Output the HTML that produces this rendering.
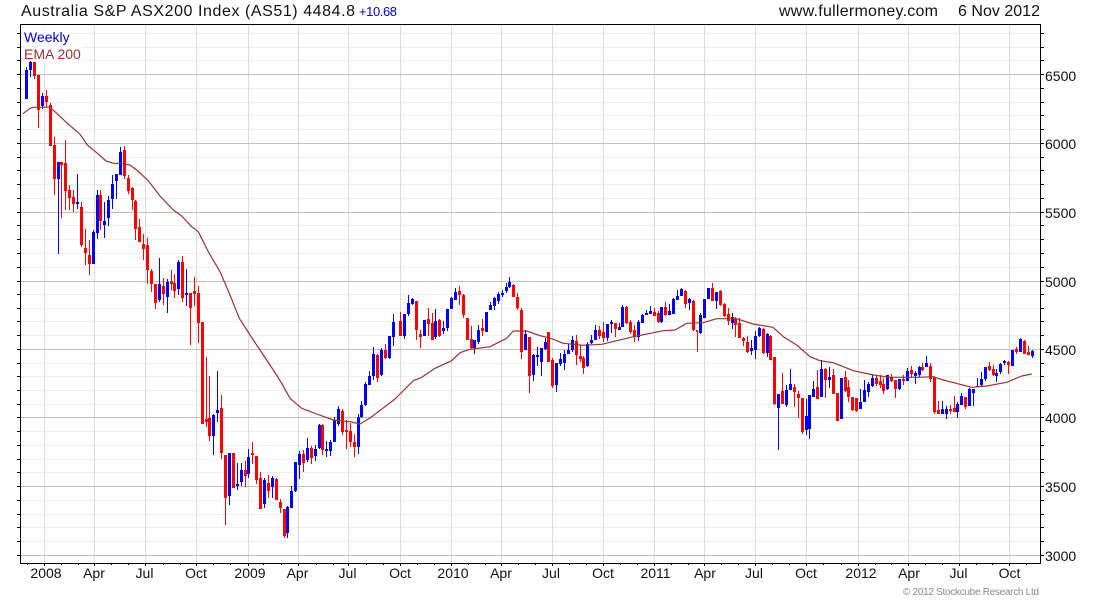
<!DOCTYPE html>
<html><head><meta charset="utf-8"><title>Australia S&amp;P ASX200 Index</title>
<style>
html,body{margin:0;padding:0;background:#fff;width:1100px;height:600px;overflow:hidden}
svg{display:block}
text{font-family:"Liberation Sans",Arial,sans-serif;font-size:14px;fill:#111}
.r{fill:#f00}.b{fill:#00f}
</style></head><body>
<svg width="1100" height="600" viewBox="0 0 1100 600" xmlns="http://www.w3.org/2000/svg">
<g shape-rendering="crispEdges" fill="none">
<path stroke="#f0f0f0" d="M20 541.5H1040M20 527.5H1040M20 514.5H1040M20 500.5H1040M20 472.5H1040M20 459.5H1040M20 445.5H1040M20 431.5H1040M20 404.5H1040M20 390.5H1040M20 376.5H1040M20 363.5H1040M20 335.5H1040M20 321.5H1040M20 308.5H1040M20 294.5H1040M20 267.5H1040M20 253.5H1040M20 239.5H1040M20 225.5H1040M20 198.5H1040M20 184.5H1040M20 170.5H1040M20 157.5H1040M20 129.5H1040M20 115.5H1040M20 102.5H1040M20 88.5H1040M20 60.5H1040M20 47.5H1040M20 33.5H1040"/>
<path stroke="#dcdcdc" d="M44.5 24V563M94.5 24V563M145.5 24V563M196.5 24V563M248.5 24V563M298.5 24V563M348.5 24V563M400.5 24V563M451.5 24V563M501.5 24V563M552.5 24V563M603.5 24V563M654.5 24V563M704.5 24V563M755.5 24V563M806.5 24V563M858.5 24V563M908.5 24V563M959.5 24V563M1009.5 24V563"/>
<path stroke="#c0c0c0" d="M20 74.5H1040M20 143.5H1040M20 212.5H1040M20 281.5H1040M20 349.5H1040M20 417.5H1040M20 486.5H1040M20 555.5H1040"/>
</g>
<rect x="22" y="27" width="50" height="18" fill="#fff"/>
<rect x="22" y="45" width="60" height="17" fill="#fff"/>
<g shape-rendering="crispEdges">
<path class="b" d="M26 67h1V99h-1zM25 70h3V99h-3zM30 61h1V77h-1zM29 62h3V70h-3z"/>
<path class="r" d="M34 62h1V79h-1zM33 62h3V76h-3zM38 75h1V128h-1zM37 75h3V110h-3z"/>
<path class="b" d="M42 93h1V109h-1zM41 96h3V106h-3z"/>
<path class="r" d="M46 90h1V107h-1zM45 96h3V102h-3zM50 103h1V146h-1zM49 105h3V146h-3zM54 137h1V195h-1zM53 145h3V179h-3z"/>
<path class="b" d="M58 162h1V254h-1zM57 162h3V179h-3z"/>
<path class="r" d="M61 162h1V218h-1zM60 162h3V165h-3zM65 140h1V210h-1zM64 163h3V191h-3zM69 185h1V210h-1zM68 190h3V198h-3zM73 190h1V212h-1zM72 197h3V204h-3z"/>
<path class="b" d="M77 174h1V209h-1zM76 202h3V204h-3z"/>
<path class="r" d="M81 202h1V247h-1zM80 207h3V245h-3zM85 229h1V265h-1zM84 248h3V253h-3zM89 240h1V275h-1zM88 255h3V264h-3z"/>
<path class="b" d="M93 230h1V264h-1zM92 232h3V264h-3zM97 190h1V239h-1zM96 195h3V233h-3z"/>
<path class="r" d="M100 190h1V230h-1zM99 195h3V221h-3z"/>
<path class="b" d="M104 202h1V238h-1zM103 221h3V225h-3zM108 196h1V226h-1zM107 200h3V218h-3zM112 175h1V209h-1zM111 184h3V199h-3zM116 174h1V199h-1zM115 174h3V181h-3zM120 147h1V175h-1zM119 152h3V175h-3z"/>
<path class="r" d="M124 146h1V179h-1zM123 150h3V176h-3zM128 175h1V194h-1zM127 178h3V191h-3zM132 187h1V210h-1zM131 188h3V200h-3zM135 200h1V240h-1zM134 201h3V229h-3zM139 219h1V242h-1zM138 227h3V242h-3zM143 234h1V260h-1zM142 244h3V249h-3zM147 238h1V284h-1zM146 245h3V270h-3zM151 269h1V292h-1zM150 271h3V284h-3zM155 284h1V309h-1zM154 284h3V303h-3z"/>
<path class="b" d="M159 258h1V302h-1zM158 284h3V300h-3z"/>
<path class="r" d="M163 278h1V305h-1zM162 286h3V294h-3z"/>
<path class="b" d="M167 279h1V313h-1zM166 282h3V297h-3z"/>
<path class="r" d="M171 270h1V290h-1zM170 281h3V284h-3zM174 274h1V298h-1zM173 283h3V291h-3z"/>
<path class="b" d="M178 260h1V295h-1zM177 262h3V289h-3z"/>
<path class="r" d="M182 256h1V302h-1zM181 262h3V298h-3z"/>
<path class="b" d="M186 269h1V306h-1zM185 293h3V295h-3z"/>
<path class="r" d="M190 293h1V345h-1zM189 293h3V308h-3zM194 277h1V306h-1zM193 291h3V294h-3zM198 286h1V343h-1zM197 293h3V323h-3zM202 322h1V424h-1zM201 322h3V424h-3zM206 357h1V427h-1zM205 419h3V422h-3zM209 376h1V441h-1zM208 418h3V436h-3z"/>
<path class="b" d="M213 414h1V455h-1zM212 415h3V436h-3zM217 371h1V422h-1zM216 410h3V413h-3z"/>
<path class="r" d="M221 395h1V459h-1zM220 408h3V453h-3zM225 455h1V525h-1zM224 455h3V498h-3z"/>
<path class="b" d="M229 453h1V505h-1zM228 453h3V496h-3z"/>
<path class="r" d="M233 453h1V488h-1zM232 453h3V488h-3z"/>
<path class="b" d="M237 463h1V490h-1zM236 484h3V486h-3zM241 463h1V486h-1zM240 470h3V482h-3z"/>
<path class="r" d="M245 461h1V487h-1zM244 470h3V476h-3z"/>
<path class="b" d="M248 449h1V478h-1zM247 457h3V474h-3z"/>
<path class="r" d="M252 442h1V464h-1zM251 453h3V455h-3zM256 456h1V484h-1zM255 456h3V480h-3zM260 472h1V509h-1zM259 478h3V509h-3z"/>
<path class="b" d="M264 478h1V508h-1zM263 480h3V504h-3z"/>
<path class="r" d="M268 475h1V498h-1zM267 483h3V491h-3z"/>
<path class="b" d="M272 476h1V498h-1zM271 478h3V487h-3z"/>
<path class="r" d="M276 478h1V500h-1zM275 479h3V500h-3zM280 499h1V513h-1zM279 502h3V508h-3zM284 509h1V538h-1zM283 509h3V536h-3z"/>
<path class="b" d="M287 506h1V538h-1zM286 507h3V533h-3zM291 486h1V508h-1zM290 491h3V508h-3zM295 462h1V492h-1zM294 462h3V491h-3zM299 451h1V479h-1zM298 454h3V465h-3z"/>
<path class="r" d="M303 450h1V472h-1zM302 454h3V463h-3z"/>
<path class="b" d="M307 438h1V462h-1zM306 448h3V460h-3z"/>
<path class="r" d="M311 446h1V464h-1zM310 448h3V458h-3z"/>
<path class="b" d="M315 445h1V461h-1zM314 449h3V456h-3zM319 424h1V449h-1zM318 425h3V448h-3z"/>
<path class="r" d="M322 424h1V455h-1zM321 425h3V450h-3z"/>
<path class="b" d="M326 441h1V457h-1zM325 449h3V451h-3zM330 440h1V456h-1zM329 442h3V451h-3zM334 417h1V442h-1zM333 420h3V442h-3zM338 406h1V426h-1zM337 409h3V424h-3z"/>
<path class="r" d="M342 409h1V435h-1zM341 411h3V432h-3zM346 420h1V449h-1zM345 430h3V432h-3zM350 423h1V447h-1zM349 431h3V442h-3zM354 434h1V457h-1zM353 442h3V447h-3z"/>
<path class="b" d="M358 414h1V454h-1zM357 417h3V447h-3zM361 401h1V418h-1zM360 405h3V417h-3zM365 382h1V406h-1zM364 384h3V405h-3zM369 371h1V385h-1zM368 376h3V385h-3zM373 347h1V380h-1zM372 354h3V376h-3z"/>
<path class="r" d="M377 354h1V382h-1zM376 355h3V378h-3z"/>
<path class="b" d="M381 348h1V376h-1zM380 350h3V375h-3z"/>
<path class="r" d="M385 344h1V359h-1zM384 350h3V358h-3z"/>
<path class="b" d="M389 336h1V359h-1zM388 336h3V358h-3zM393 314h1V346h-1zM392 322h3V337h-3z"/>
<path class="r" d="M400 312h1V336h-1zM399 321h3V336h-3z"/>
<path class="b" d="M404 314h1V339h-1zM403 314h3V336h-3zM408 295h1V316h-1zM407 303h3V314h-3zM412 298h1V305h-1zM411 299h3V304h-3z"/>
<path class="r" d="M416 301h1V340h-1zM415 301h3V330h-3zM420 330h1V348h-1zM419 334h3V337h-3z"/>
<path class="b" d="M424 320h1V336h-1zM423 320h3V336h-3z"/>
<path class="r" d="M428 308h1V336h-1zM427 319h3V324h-3zM432 313h1V340h-1zM431 323h3V340h-3z"/>
<path class="b" d="M435 309h1V339h-1zM434 321h3V337h-3z"/>
<path class="r" d="M439 319h1V337h-1zM438 320h3V336h-3z"/>
<path class="b" d="M443 321h1V334h-1zM442 328h3V331h-3zM447 309h1V331h-1zM446 309h3V328h-3zM451 297h1V309h-1zM450 298h3V309h-3zM455 288h1V300h-1zM454 292h3V300h-3z"/>
<path class="r" d="M459 286h1V305h-1zM458 291h3V295h-3zM463 294h1V318h-1zM462 295h3V315h-3zM467 318h1V340h-1zM466 318h3V340h-3zM471 326h1V349h-1zM470 339h3V348h-3z"/>
<path class="b" d="M474 340h1V354h-1zM473 340h3V348h-3zM478 325h1V344h-1zM477 330h3V342h-3z"/>
<path class="r" d="M482 319h1V336h-1zM481 328h3V331h-3z"/>
<path class="b" d="M486 312h1V332h-1zM485 312h3V332h-3zM490 302h1V310h-1zM489 305h3V310h-3zM494 297h1V310h-1zM493 298h3V306h-3zM498 292h1V304h-1zM497 294h3V301h-3zM502 290h1V297h-1zM501 293h3V295h-3zM506 283h1V293h-1zM505 287h3V291h-3zM509 277h1V288h-1zM508 282h3V287h-3z"/>
<path class="r" d="M513 284h1V297h-1zM512 285h3V297h-3zM517 293h1V310h-1zM516 297h3V308h-3zM521 308h1V359h-1zM520 310h3V352h-3z"/>
<path class="b" d="M525 330h1V350h-1zM524 334h3V350h-3z"/>
<path class="r" d="M529 337h1V393h-1zM528 337h3V376h-3z"/>
<path class="b" d="M533 354h1V381h-1zM532 355h3V375h-3zM537 347h1V366h-1zM536 355h3V357h-3zM541 348h1V376h-1zM540 348h3V362h-3zM545 338h1V350h-1zM544 342h3V349h-3z"/>
<path class="r" d="M548 332h1V362h-1zM547 332h3V362h-3zM552 358h1V388h-1zM551 360h3V386h-3z"/>
<path class="b" d="M556 363h1V392h-1zM555 363h3V385h-3zM560 353h1V366h-1zM559 359h3V364h-3zM564 350h1V370h-1zM563 354h3V363h-3zM568 344h1V354h-1zM567 350h3V354h-3zM572 336h1V352h-1zM571 340h3V350h-3z"/>
<path class="r" d="M576 335h1V365h-1zM575 341h3V355h-3zM580 345h1V362h-1zM579 356h3V359h-3zM583 356h1V374h-1zM582 358h3V368h-3z"/>
<path class="b" d="M587 342h1V367h-1zM586 344h3V366h-3zM591 335h1V344h-1zM590 340h3V343h-3zM595 325h1V340h-1zM594 330h3V340h-3z"/>
<path class="r" d="M599 326h1V339h-1zM598 330h3V336h-3zM603 322h1V342h-1zM602 332h3V338h-3z"/>
<path class="b" d="M607 324h1V341h-1zM606 324h3V338h-3zM611 320h1V333h-1zM610 322h3V324h-3z"/>
<path class="r" d="M615 323h1V337h-1zM614 323h3V329h-3z"/>
<path class="b" d="M619 323h1V330h-1zM618 327h3V330h-3zM622 305h1V327h-1zM621 307h3V327h-3z"/>
<path class="r" d="M626 306h1V324h-1zM625 307h3V323h-3zM630 320h1V334h-1zM629 322h3V332h-3zM634 325h1V342h-1zM633 330h3V336h-3z"/>
<path class="b" d="M638 320h1V341h-1zM637 322h3V337h-3zM642 314h1V323h-1zM641 315h3V323h-3zM646 310h1V315h-1zM645 313h3V315h-3zM650 306h1V314h-1zM649 311h3V314h-3z"/>
<path class="r" d="M654 308h1V316h-1zM653 312h3V316h-3zM658 311h1V323h-1zM657 313h3V322h-3z"/>
<path class="b" d="M661 307h1V323h-1zM660 307h3V322h-3z"/>
<path class="r" d="M665 302h1V316h-1zM664 307h3V315h-3z"/>
<path class="b" d="M669 304h1V315h-1zM668 311h3V315h-3zM673 298h1V314h-1zM672 299h3V314h-3zM677 290h1V300h-1zM676 296h3V300h-3zM681 288h1V296h-1zM680 289h3V296h-3z"/>
<path class="r" d="M685 290h1V308h-1zM684 291h3V304h-3z"/>
<path class="b" d="M689 298h1V310h-1zM688 299h3V303h-3z"/>
<path class="r" d="M693 300h1V331h-1zM692 301h3V330h-3zM697 330h1V352h-1zM696 330h2V332h-2z"/>
<path class="b" d="M700 313h1V334h-1zM699 315h3V333h-3zM704 299h1V318h-1zM703 299h3V318h-3zM708 288h1V299h-1zM707 288h3V299h-3z"/>
<path class="r" d="M712 283h1V301h-1zM711 288h3V301h-3z"/>
<path class="b" d="M716 292h1V309h-1zM715 292h3V301h-3z"/>
<path class="r" d="M720 290h1V306h-1zM719 291h3V305h-3zM724 303h1V317h-1zM723 304h3V316h-3zM728 308h1V325h-1zM727 314h3V321h-3z"/>
<path class="b" d="M732 313h1V329h-1zM731 317h3V323h-3z"/>
<path class="r" d="M735 317h1V337h-1zM734 319h3V325h-3zM739 318h1V338h-1zM738 323h3V338h-3zM743 337h1V346h-1zM742 338h3V341h-3zM747 336h1V353h-1zM746 342h3V352h-3z"/>
<path class="b" d="M751 340h1V355h-1zM750 348h3V351h-3zM755 331h1V359h-1zM754 336h3V350h-3zM759 327h1V337h-1zM758 328h3V336h-3z"/>
<path class="r" d="M763 328h1V354h-1zM762 329h3V353h-3z"/>
<path class="b" d="M767 333h1V357h-1zM766 334h3V353h-3z"/>
<path class="r" d="M770 335h1V360h-1zM769 336h3V360h-3zM774 357h1V405h-1zM773 357h3V404h-3z"/>
<path class="b" d="M778 394h1V450h-1zM777 394h3V408h-3z"/>
<path class="r" d="M782 373h1V404h-1zM781 391h3V404h-3z"/>
<path class="b" d="M786 385h1V407h-1zM785 390h3V405h-3zM790 369h1V390h-1zM789 384h3V390h-3z"/>
<path class="r" d="M794 384h1V407h-1zM793 387h3V392h-3zM798 391h1V418h-1zM797 394h3V398h-3zM802 398h1V434h-1zM801 398h3V432h-3z"/>
<path class="b" d="M806 399h1V435h-1zM805 416h3V430h-3zM809 395h1V439h-1zM808 395h3V429h-3zM813 381h1V397h-1zM812 389h3V397h-3z"/>
<path class="r" d="M817 370h1V399h-1zM816 387h3V399h-3z"/>
<path class="b" d="M821 360h1V397h-1zM820 369h3V397h-3z"/>
<path class="r" d="M825 368h1V398h-1zM824 369h3V380h-3z"/>
<path class="b" d="M829 367h1V388h-1zM828 377h3V380h-3z"/>
<path class="r" d="M833 369h1V394h-1zM832 375h3V394h-3zM837 393h1V421h-1zM836 393h3V421h-3z"/>
<path class="b" d="M841 378h1V419h-1zM840 378h3V419h-3z"/>
<path class="r" d="M845 371h1V392h-1zM844 377h3V391h-3zM848 380h1V402h-1zM847 387h3V397h-3zM852 397h1V411h-1zM851 397h3V410h-3zM856 398h1V412h-1zM855 398h3V411h-3z"/>
<path class="b" d="M860 389h1V409h-1zM859 402h3V409h-3zM864 380h1V402h-1zM863 390h3V402h-3zM868 382h1V397h-1zM867 384h3V392h-3zM872 374h1V387h-1zM871 378h3V386h-3z"/>
<path class="r" d="M876 376h1V386h-1zM875 378h3V384h-3zM880 375h1V388h-1zM879 381h3V385h-3zM883 378h1V394h-1zM882 384h3V391h-3z"/>
<path class="b" d="M887 375h1V390h-1zM886 375h3V389h-3z"/>
<path class="r" d="M891 374h1V382h-1zM890 377h3V381h-3zM895 380h1V398h-1zM894 380h3V389h-3z"/>
<path class="b" d="M899 379h1V390h-1zM898 379h3V389h-3z"/>
<path class="r" d="M903 375h1V385h-1zM902 379h3V381h-3z"/>
<path class="b" d="M907 368h1V381h-1zM906 371h3V381h-3z"/>
<path class="r" d="M911 366h1V378h-1zM910 370h3V374h-3z"/>
<path class="b" d="M915 371h1V384h-1zM914 373h3V376h-3zM919 366h1V377h-1zM918 367h3V375h-3z"/>
<path class="r" d="M922 363h1V371h-1zM921 367h3V370h-3z"/>
<path class="b" d="M926 356h1V367h-1zM925 363h3V367h-3z"/>
<path class="r" d="M930 363h1V382h-1zM929 366h3V379h-3zM934 377h1V414h-1zM933 377h3V412h-3zM938 401h1V414h-1zM937 410h3V414h-3z"/>
<path class="b" d="M942 401h1V414h-1zM941 409h3V414h-3zM946 406h1V419h-1zM945 409h3V414h-3z"/>
<path class="r" d="M950 405h1V414h-1zM949 409h3V411h-3zM954 396h1V412h-1zM953 408h3V412h-3z"/>
<path class="b" d="M957 402h1V418h-1zM956 404h3V412h-3zM961 393h1V405h-1zM960 396h3V405h-3z"/>
<path class="r" d="M965 397h1V409h-1zM964 397h3V407h-3z"/>
<path class="b" d="M969 388h1V406h-1zM968 389h3V406h-3zM973 389h1V406h-1zM972 389h3V393h-3zM977 378h1V387h-1zM976 386h3V387h-3zM981 372h1V386h-1zM980 379h3V385h-3zM985 367h1V381h-1zM984 367h3V379h-3z"/>
<path class="r" d="M989 362h1V371h-1zM988 366h3V370h-3zM993 365h1V376h-1zM992 369h3V375h-3z"/>
<path class="b" d="M996 369h1V382h-1zM995 373h3V376h-3zM1000 363h1V374h-1zM999 364h3V372h-3zM1004 360h1V365h-1zM1003 361h3V363h-3z"/>
<path class="r" d="M1008 361h1V374h-1zM1007 362h3V365h-3z"/>
<path class="b" d="M1012 350h1V366h-1zM1011 350h3V366h-3z"/>
<path class="r" d="M1016 347h1V354h-1zM1015 349h3V352h-3z"/>
<path class="b" d="M1020 338h1V352h-1zM1019 339h3V352h-3z"/>
<path class="r" d="M1024 340h1V354h-1zM1023 341h3V354h-3zM1028 346h1V355h-1zM1027 352h3V355h-3z"/>
<path class="b" d="M1032 350h1V358h-1zM1031 351h3V356h-3z"/>
</g>
<path fill="none" stroke="#993333" stroke-width="1.2" stroke-linejoin="round" d="M23 113.7L30 108.3 33.3 107.3 50 107.3 56.7 113.3 66.7 122.7 80 134.3 87.3 145 96.7 152.7 106 161 113.3 163.3 120 163.3 130 165 136.7 170 148.3 180.7 160 196 173.3 210 181.7 216 191.7 226.7 198.3 231.7 208.3 251.7 220 271.7 230 295 239.3 318.3 253.3 340 260 350 273.3 370 281.7 383.3 290 398.3 301.7 408.3 316.7 414 333.3 420 350 421.7 360 424 370 418 395 399 413.3 380.7 421.7 377.3 435 368.3 451.7 360.7 460 352.7 470 349.3 490 346.7 506.7 338.3 513.3 331 526.7 331 540 335.7 550 338 563.3 343.3 583.3 345.3 601.7 344.3 616.7 340.7 633.3 336.7 663.3 330.7 675 330 686.7 323.3 703 322.7 716.7 318.7 736.7 318.7 753 324 773 327.3 783.3 336.7 796.7 345 810 356.7 820 360.7 833.3 362.7 853.3 370.7 873.3 375 890 377.3 920 377.3 933.3 376.7 943.3 380 971.7 387.3 986.7 386 1006.7 382.3 1021.7 376 1031.7 374"/>
<g shape-rendering="crispEdges" fill="none" stroke="#000">
<path d="M20.5 24V563.5M1040.5 24V563.5M20 24.5H1041M20 563.5H1041"/>
<path d="M17 541.5h3M17 527.5h3M17 514.5h3M17 500.5h3M17 486.5h3M17 472.5h3M17 459.5h3M17 445.5h3M17 431.5h3M17 417.5h3M17 404.5h3M17 390.5h3M17 376.5h3M17 363.5h3M17 349.5h3M17 335.5h3M17 321.5h3M17 308.5h3M17 294.5h3M17 281.5h3M17 267.5h3M17 253.5h3M17 239.5h3M17 225.5h3M17 212.5h3M17 198.5h3M17 184.5h3M17 170.5h3M17 157.5h3M17 143.5h3M17 129.5h3M17 115.5h3M17 102.5h3M17 88.5h3M17 74.5h3M17 60.5h3M17 47.5h3M17 33.5h3M17 555.5h3"/>
<path d="M1041 541.5h3M1041 527.5h3M1041 514.5h3M1041 500.5h3M1041 486.5h3M1041 472.5h3M1041 459.5h3M1041 445.5h3M1041 431.5h3M1041 417.5h3M1041 404.5h3M1041 390.5h3M1041 376.5h3M1041 363.5h3M1041 349.5h3M1041 335.5h3M1041 321.5h3M1041 308.5h3M1041 294.5h3M1041 281.5h3M1041 267.5h3M1041 253.5h3M1041 239.5h3M1041 225.5h3M1041 212.5h3M1041 198.5h3M1041 184.5h3M1041 170.5h3M1041 157.5h3M1041 143.5h3M1041 129.5h3M1041 115.5h3M1041 102.5h3M1041 88.5h3M1041 74.5h3M1041 60.5h3M1041 47.5h3M1041 33.5h3M1041 555.5h3"/>
<path d="M44.5 564v2M94.5 564v2M145.5 564v2M196.5 564v2M248.5 564v2M298.5 564v2M348.5 564v2M400.5 564v2M451.5 564v2M501.5 564v2M552.5 564v2M603.5 564v2M654.5 564v2M704.5 564v2M755.5 564v2M806.5 564v2M858.5 564v2M908.5 564v2M959.5 564v2M1009.5 564v2"/>
<path d="M27.5 564v1M61.5 564v1M78.5 564v1M111.5 564v1M128.5 564v1M163.5 564v1M180.5 564v1M213.5 564v1M230.5 564v1M263.5 564v1M281.5 564v1M316.5 564v1M333.5 564v1M366.5 564v1M383.5 564v1M417.5 564v1M434.5 564v1M468.5 564v1M485.5 564v1M518.5 564v1M535.5 564v1M569.5 564v1M586.5 564v1M620.5 564v1M637.5 564v1M671.5 564v1M688.5 564v1M721.5 564v1M738.5 564v1M772.5 564v1M789.5 564v1M823.5 564v1M841.5 564v1M875.5 564v1M891.5 564v1M925.5 564v1M942.5 564v1M976.5 564v1M992.5 564v1M1026.5 564v1"/>
</g>
<text x="21" y="16" style="font-size:16px" textLength="334" lengthAdjust="spacing">Australia S&amp;P ASX200 Index (AS51) 4484.8</text>
<text x="359" y="16" style="font-size:13px;fill:#0000c8" textLength="38" lengthAdjust="spacing">+10.68</text>
<text x="779" y="16" style="font-size:16px" textLength="159" lengthAdjust="spacing">www.fullermoney.com</text>
<text x="958" y="16" style="font-size:16px" textLength="82" lengthAdjust="spacing">6 Nov 2012</text>
<text x="24" y="42" style="fill:#0000cc">Weekly</text>
<text x="24" y="59" style="fill:#993333">EMA 200</text>
<text x="1045" y="81">6500</text><text x="1045" y="149">6000</text><text x="1045" y="218">5500</text><text x="1045" y="287">5000</text><text x="1045" y="355">4500</text><text x="1045" y="423">4000</text><text x="1045" y="492">3500</text><text x="1045" y="561">3000</text>
<g text-anchor="middle">
<text x="46" y="578">2008</text><text x="94" y="578">Apr</text><text x="144.5" y="578">Jul</text><text x="196" y="578">Oct</text><text x="250" y="578">2009</text><text x="297.5" y="578">Apr</text><text x="347.5" y="578">Jul</text><text x="400" y="578">Oct</text><text x="453" y="578">2010</text><text x="501" y="578">Apr</text><text x="551" y="578">Jul</text><text x="603" y="578">Oct</text><text x="655.5" y="578">2011</text><text x="705" y="578">Apr</text><text x="754" y="578">Jul</text><text x="806" y="578">Oct</text><text x="861" y="578">2012</text><text x="909" y="578">Apr</text><text x="958.5" y="578">Jul</text><text x="1009.5" y="578">Oct</text>
</g>
<text x="903" y="595" style="font-size:10px;fill:#8a8a8a" textLength="136" lengthAdjust="spacing">© 2012 Stockcube Research Ltd</text>
</svg>
</body></html>
